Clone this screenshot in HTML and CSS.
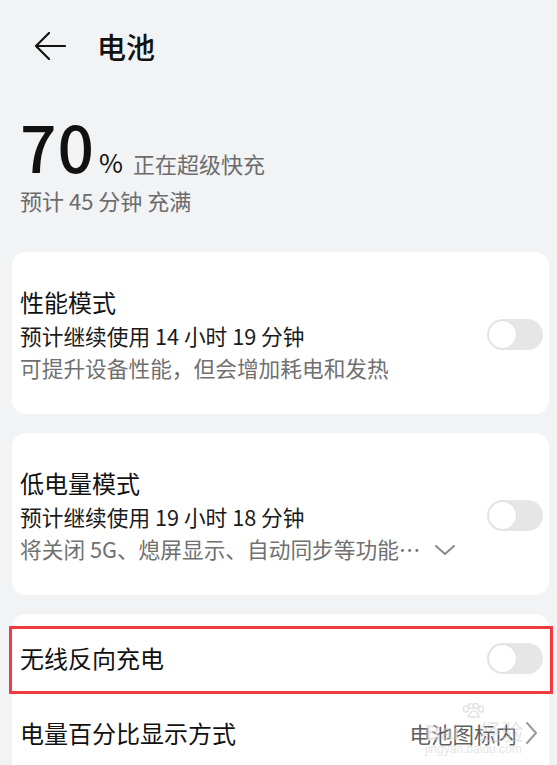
FILE: index.html
```html
<!DOCTYPE html>
<html lang="zh-CN">
<head>
  <meta charset="UTF-8">
  <meta name="viewport" content="width=device-width, initial-scale=1.0">
  <title>电池</title>
  <link rel="stylesheet" href="styles.css">
</head>
<body>
  <!-- Title bar -->
  <header class="topbar">
    <svg class="back" width="32" height="28" viewBox="0 0 32 28">
      <path d="M31 14H2M15 1L2 14l13 13" fill="none" stroke="#111" stroke-width="2.2" stroke-linecap="round" stroke-linejoin="round"/>
    </svg>
    <h1 class="page-title">电池</h1>
  </header>

  <!-- Charge summary -->
  <section class="summary">
    <div class="level">
      <span class="level-num">70</span>
      <span class="level-pct">%</span>
      <span class="level-state">正在超级快充</span>
    </div>
    <p class="level-eta">预计 45 分钟 充满</p>
  </section>

  <div class="cards">
    <div class="card mode">
      <div class="mode-text">
        <div class="item-title">性能模式</div>
        <div class="item-line">预计继续使用 14 小时 19 分钟</div>
        <div class="item-note">可提升设备性能，但会增加耗电和发热</div>
      </div>
      <span class="switch"><span class="knob"></span></span>
    </div>

    <div class="card mode">
      <div class="mode-text">
        <div class="item-title">低电量模式</div>
        <div class="item-line">预计继续使用 19 小时 18 分钟</div>
        <div class="item-note">将关闭 5G、熄屏显示、自动同步等功能…
          <svg class="expand" width="20" height="10" viewBox="0 0 20 10">
            <path d="M1 1l9 8 9-8" fill="none" stroke="#8a8a8a" stroke-width="2" stroke-linecap="round" stroke-linejoin="round"/>
          </svg>
        </div>
      </div>
      <span class="switch"><span class="knob"></span></span>
    </div>

    <div class="card list">
      <div class="row marked">
        <span class="item-title">无线反向充电</span>
        <span class="switch"><span class="knob"></span></span>
      </div>
      <div class="row">
        <span class="item-title">电量百分比显示方式</span>
        <span class="row-value">电池图标内
          <svg class="more" width="12" height="22" viewBox="0 0 12 22">
            <path d="M2 1l9 10-9 10" fill="none" stroke="#9a9a9a" stroke-width="2" stroke-linecap="round" stroke-linejoin="round"/>
          </svg>
        </span>
        <!-- faint site watermark -->
        <span class="watermark">
          <svg class="paw" width="24" height="16" viewBox="0 0 24 16">
            <g fill="none" stroke="#e2e2e2" stroke-width="1.5">
              <ellipse cx="5" cy="6" rx="2.5" ry="3"/>
              <ellipse cx="10" cy="3" rx="2.5" ry="2.5"/>
              <ellipse cx="15" cy="3" rx="2.5" ry="2.5"/>
              <ellipse cx="20" cy="6" rx="2.5" ry="3"/>
              <path d="M7 14c1-4 4-6 6-6s4 2 5 6z"/>
            </g>
          </svg>
          <span class="wm-main">Bai<b>经验</b></span>
          <small>jingyan.baidu.com</small>
        </span>
      </div>
    </div>
  </div>
</body>
</html>
```

FILE: styles.css
```css
/* Page */
body {
  margin: 0;
  background-color: #f1f3f5;
  color: #111;
  font-family: "Noto Sans CJK SC", "Noto Sans", sans-serif;
}

/* Title bar */
.topbar {
  display: flex;
  align-items: center;
  height: 92px;
  padding-left: 34px;
  gap: 31px;
}

.page-title {
  margin: 0;
  font-size: 29px;
  font-weight: 500;
  line-height: 1;
}

/* Charge summary */
.summary {
  padding: 10px 0 0 20px;
  height: 160px;
  box-sizing: border-box;
}

.level {
  display: flex;
  align-items: baseline;
  height: 84px;
}

.level-num {
  font-size: 64px;
  font-weight: 500;
  line-height: 86px;
  letter-spacing: 1px;
}

.level-pct {
  font-size: 26px;
  margin-left: 4px;
}

.level-state {
  font-size: 22px;
  color: #6c6c6c;
  margin-left: 10px;
}

.level-eta {
  margin: 0;
  font-size: 22px;
  line-height: 28px;
  color: #6c6c6c;
}

/* Cards */
.cards {
  display: flex;
  flex-direction: column;
  gap: 19px;
  margin: 0 8px 0 12px;
}

.card {
  background: #fff;
  border-radius: 14px;
}

.card.mode {
  display: flex;
  align-items: center;
  justify-content: space-between;
  padding: 32px 6px 30px 8px;
}

.item-title {
  font-size: 24px;
  line-height: 36px;
  color: #111;
}

.item-line {
  font-size: 21.7px;
  line-height: 32px;
  color: #1a1a1a;
}

.item-note {
  display: flex;
  align-items: center;
  font-size: 21.7px;
  line-height: 32px;
  color: #707070;
}

.expand {
  margin-left: 14px;
  margin-top: 2px;
}

/* Switch */
.switch {
  display: flex;
  align-items: center;
  width: 56px;
  height: 31px;
  padding: 0 2px;
  box-sizing: border-box;
  border-radius: 16px;
  background: #e6e6e6;
  flex-shrink: 0;
}

.knob {
  width: 27px;
  height: 27px;
  border-radius: 50%;
  background: #fff;
  box-shadow: 0 0 0 1px #e1e1e1;
}

/* List card */
.card.list {
  padding-top: 8px;
  height: 160px;
}

.row {
  position: relative;
  display: flex;
  align-items: center;
  justify-content: space-between;
  padding: 0 6px 0 8px;
  height: 72px;
}

.row + .row {
  height: 78px;
}

/* red annotation frame */
.row.marked::after {
  content: "";
  position: absolute;
  left: -3px;
  right: -4px;
  top: 4px;
  bottom: 0;
  border: 3px solid #f23a3f;
}

.row-value {
  display: flex;
  align-items: center;
  gap: 8px;
  font-size: 21.5px;
  color: #5e5e5e;
  padding-right: 6px;
}

.watermark {
  position: absolute;
  left: 413px;
  top: 9px;
  width: 100px;
  line-height: 1;
  pointer-events: none;
}

.paw {
  display: block;
  margin-left: 36px;
}

.wm-main {
  display: block;
  font-family: "Liberation Sans", sans-serif;
  font-size: 22px;
  font-weight: bold;
  color: rgba(205, 205, 205, 0.5);
}

.wm-main b {
  font-family: "Noto Sans CJK SC", sans-serif;
  font-weight: normal;
  margin-left: 20px;
}

.watermark small {
  display: block;
  font-family: "Liberation Sans", sans-serif;
  font-size: 12px;
  color: rgba(205, 205, 205, 0.55);
  margin-top: -1px;
}
```
